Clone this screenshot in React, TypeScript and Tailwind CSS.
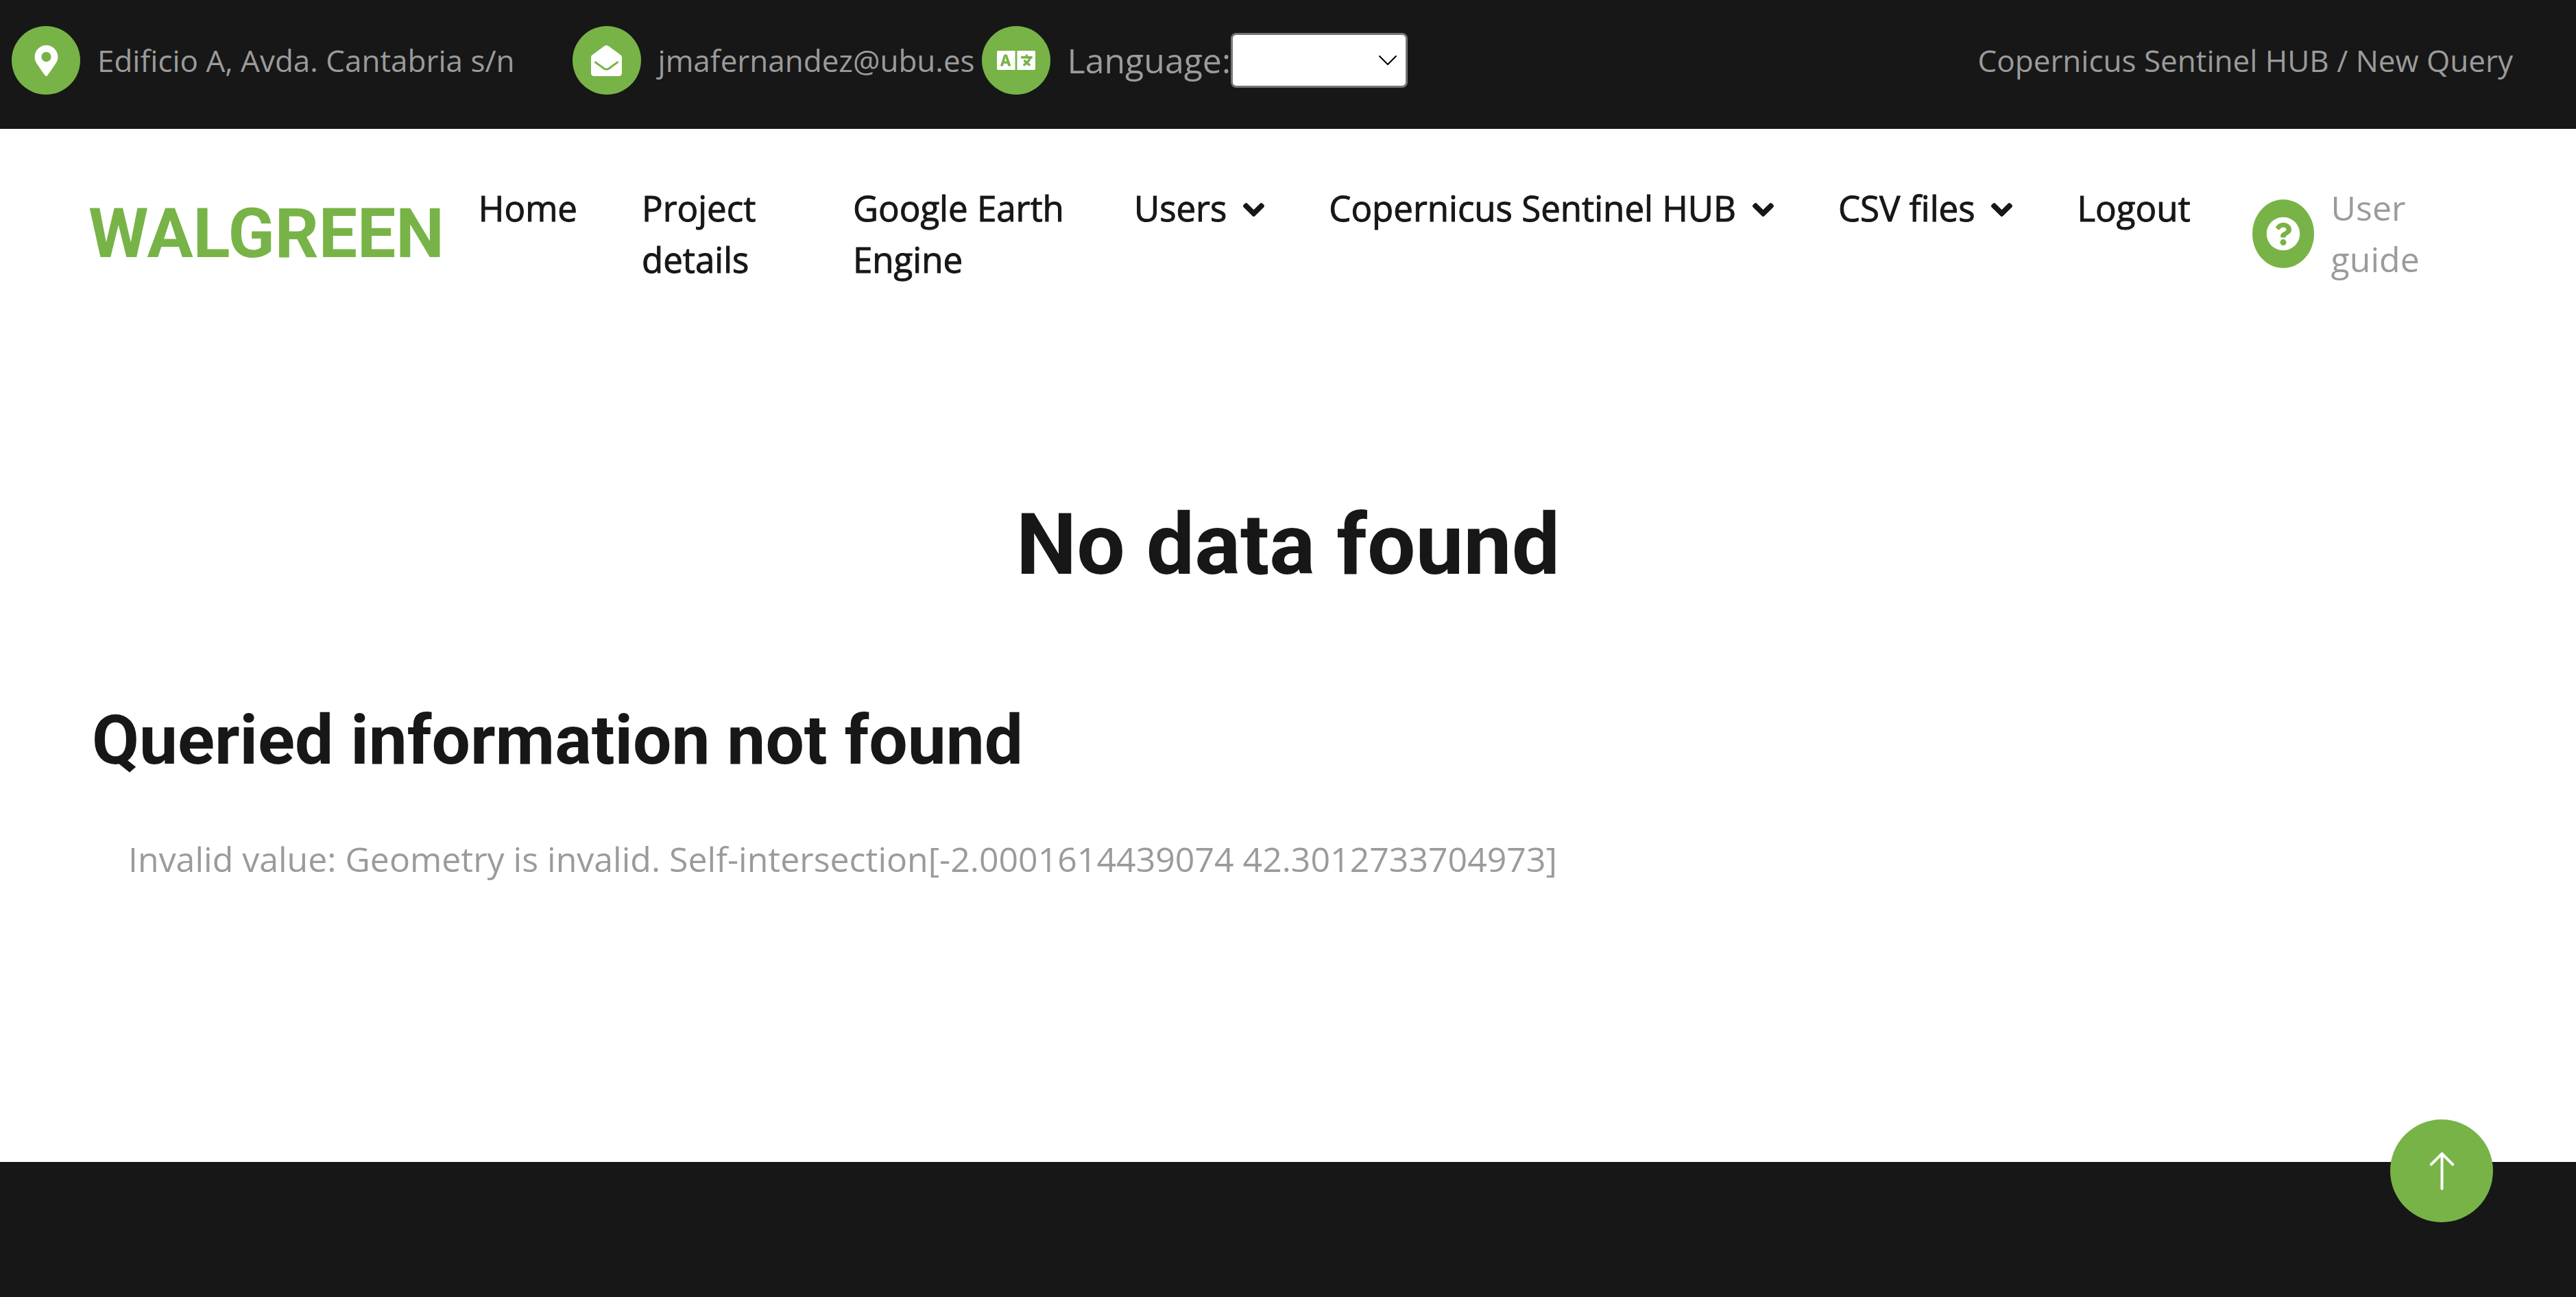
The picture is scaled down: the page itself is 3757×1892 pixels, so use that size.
import React from "react";
import {
  FaAngleDown,
  FaEnvelopeOpen,
  FaLanguage,
  FaMapMarkerAlt,
  FaQuestionCircle,
} from "react-icons/fa";
import { BsArrowUp, BsChevronDown } from "react-icons/bs";

function Disc({ children, className = "w-[100px]" }: { children: React.ReactNode; className?: string }) {
  return (
    <span className={`flex h-[100px] shrink-0 items-center justify-center rounded-[50%] bg-[#78b347] text-white ${className}`}>
      {children}
    </span>
  );
}

type NavItem = { label: string; menu?: boolean; width?: string };

const navItems: NavItem[] = [
  { label: "Home" },
  { label: "Project details", width: "w-[214px]" },
  { label: "Google Earth Engine", width: "w-[316px]" },
  { label: "Users", menu: true },
  { label: "Copernicus Sentinel HUB", menu: true },
  { label: "CSV files", menu: true },
  { label: "Logout" },
];

function TopBar() {
  return (
    <div className="flex items-center justify-between bg-[#171717] pt-[38px] pr-[92px] pb-[50px] pl-[17px] text-[44px] leading-[66px]">
      <div className="flex items-center">
        <div className="mr-[84px] flex items-center gap-[25px]">
          <Disc>
            <FaMapMarkerAlt className="size-[45px]" />
          </Disc>
          <span>Edificio A, Avda. Cantabria s/n</span>
        </div>
        <div className="mr-[10px] flex items-center gap-[25px]">
          <Disc>
            <FaEnvelopeOpen className="size-[45px]" />
          </Disc>
          <span>jmafernandez@ubu.es</span>
        </div>
        <div className="flex items-center">
          <Disc className="mr-[25px] w-[100px]">
            <FaLanguage className="size-[56px]" />
          </Disc>
          <label htmlFor="language" className="text-[50px] leading-[75px]">
            Language:
          </label>
          <div className="relative">
            <select
              id="language"
              defaultValue=""
              className="block h-20 w-[258px] appearance-none rounded-lg border-3 border-[#767676] bg-white text-black"
            >
              <option value=""></option>
            </select>
            <BsChevronDown className="pointer-events-none absolute top-[24px] right-[13px] size-[32px] text-black" />
          </div>
        </div>
      </div>
      <span>Copernicus Sentinel HUB / New Query</span>
    </div>
  );
}

function Header() {
  return (
    <header className="flex items-center pt-[78px] pb-[76px] pl-[129px] text-[50px] leading-[75px]">
      <a href="#" className="mr-[50px] font-['Roboto'] text-[100px] leading-[120px] font-bold text-[#78b347]">
        WALGREEN
      </a>
      <nav className="flex items-start gap-[94px] text-[51px] font-medium text-[#171717] [-webkit-text-stroke:1px_#171717]">
        {navItems.map((item) => (
          <a key={item.label} href="#" className={`flex items-center gap-6 ${item.width ?? "whitespace-nowrap"}`}>
            {item.label}
            {item.menu && <FaAngleDown className="mt-1 h-[50px] w-[31px]" />}
          </a>
        ))}
      </nav>
      <a href="#" className="ml-[90px] flex items-center gap-[25px]">
        <Disc className="w-[90px]">
          <FaQuestionCircle className="size-[50px]" />
        </Disc>
        <span className="w-[140px]">User guide</span>
      </a>
    </header>
  );
}

export default function App() {
  return (
    <div className="flex min-h-screen flex-col bg-white font-['Open_Sans',sans-serif] text-[#9b9b9b]">
      <TopBar />
      <Header />
      <main className="px-[134px] pt-[228px] pb-[404px]">
        <h1 className="text-center font-['Roboto'] text-[125px] leading-[150px] font-bold text-[#171717]">
          No data found
        </h1>
        <h2 className="mt-[150px] font-['Roboto'] text-[100px] leading-[120px] font-bold text-[#171717]">
          Queried information not found
        </h2>
        <p className="mt-[76px] pl-[53px] text-[50px] leading-[75px]">
          Invalid value: Geometry is invalid. Self-intersection[-2.0001614439074 42.3012733704973]
        </p>
      </main>
      <footer className="min-h-[197px] flex-1 bg-[#171717]" />
      <button
        type="button"
        aria-label="Back to top"
        className="fixed right-[121px] bottom-[109px] flex size-[150px] items-center justify-center rounded-full bg-[#78b347] text-white"
      >
        <BsArrowUp className="size-[63px]" />
      </button>
    </div>
  );
}
